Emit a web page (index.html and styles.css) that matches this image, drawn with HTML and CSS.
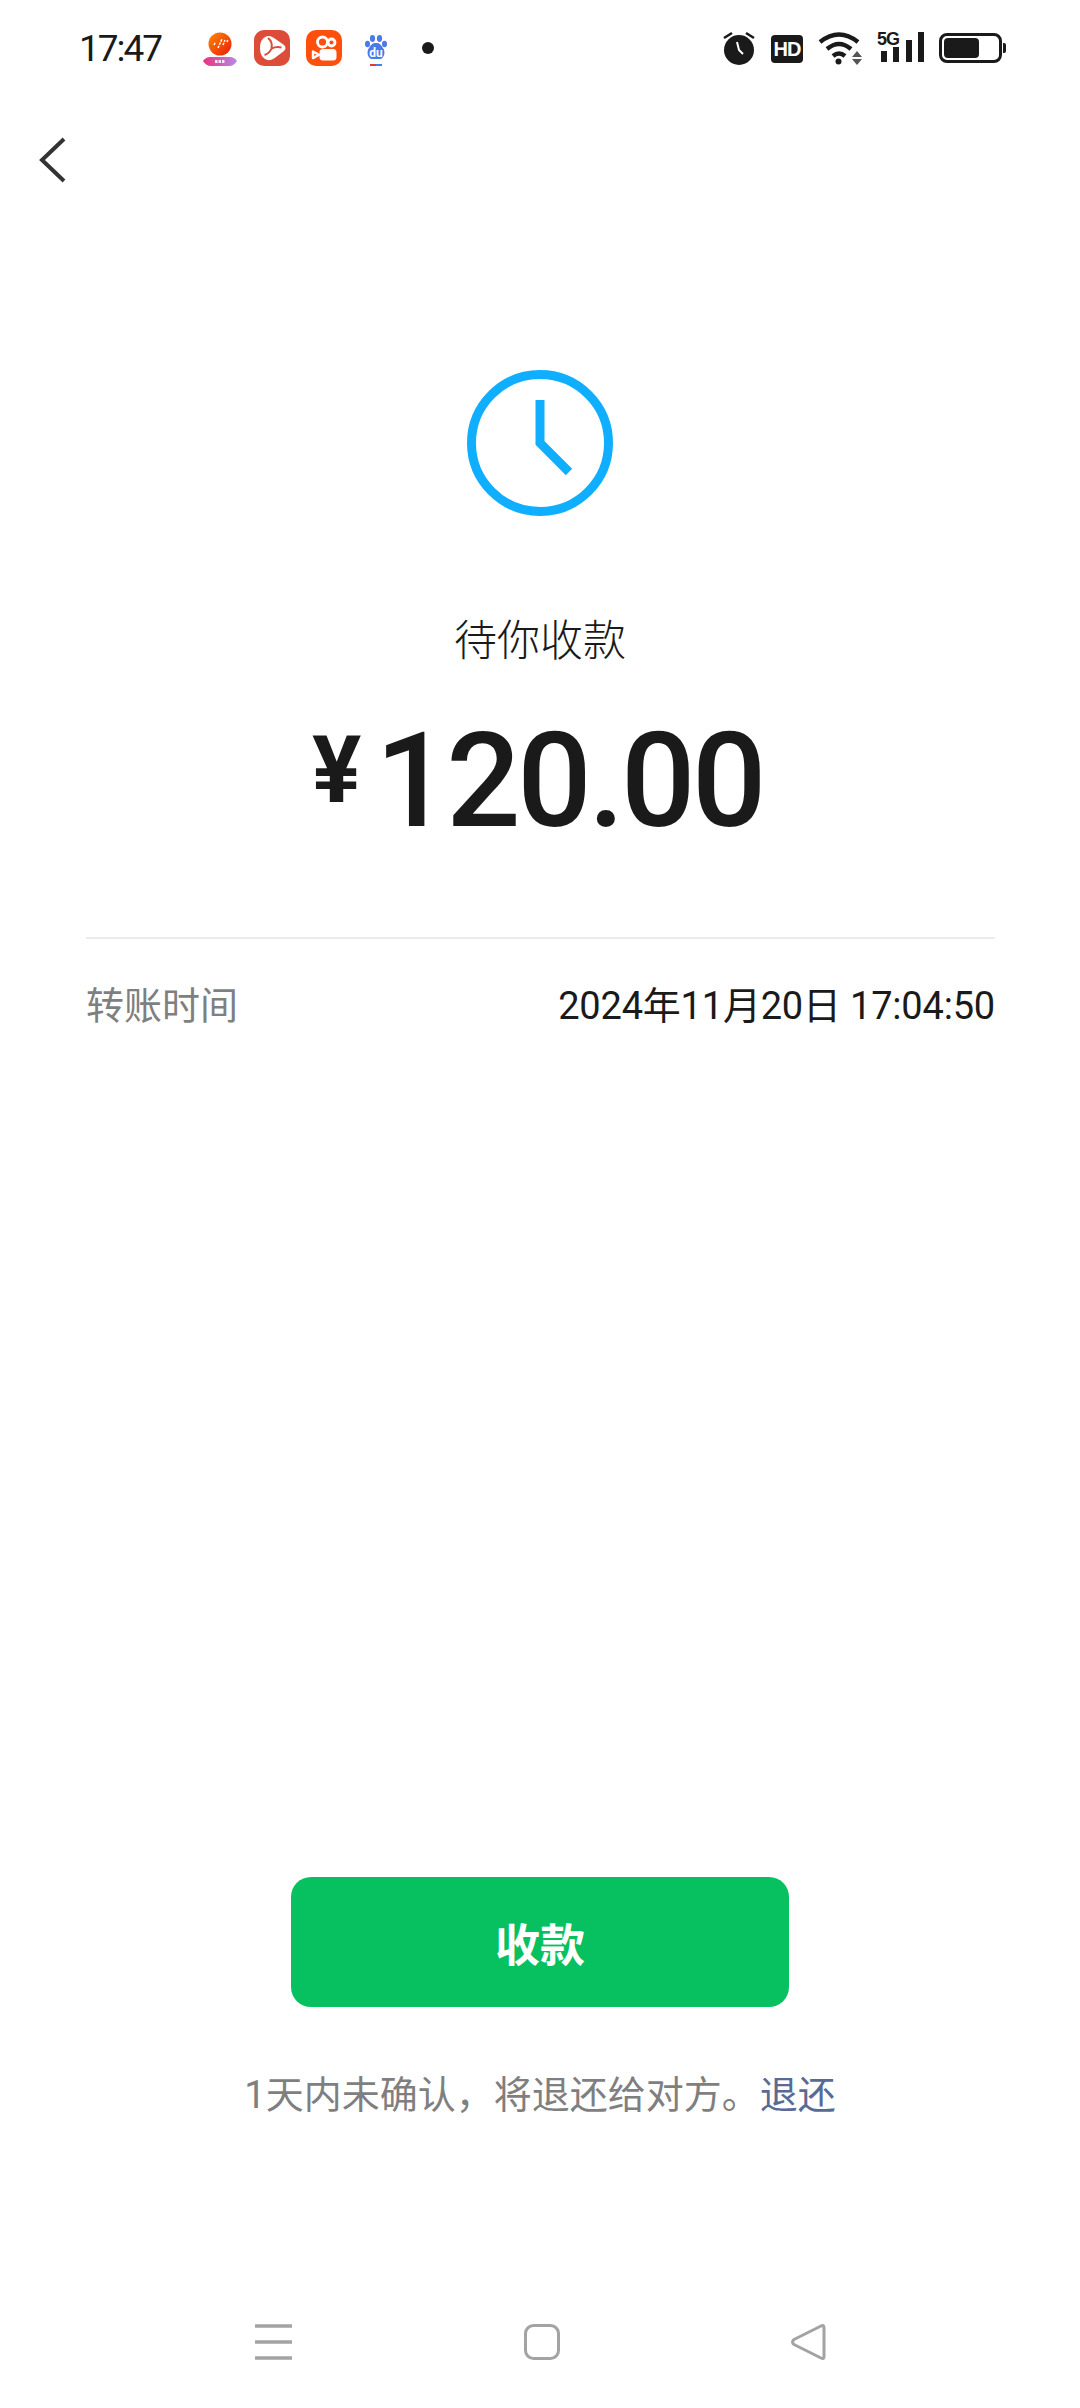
FILE: index.html
```html
<!DOCTYPE html>
<html lang="zh-CN">
<head>
    <meta charset="UTF-8">
    <meta name="viewport" content="width=device-width, initial-scale=1.0">
    <title>待你收款</title>
    <link rel="stylesheet" href="styles.css">
</head>
<body>

<div class="page">
    <!-- status bar -->
    <div class="status-bar">
        <span class="time">17:47</span>
        <div class="app-icons">
            <svg class="ic-music" width="36" height="36" viewBox="0 0 36 36">
                <defs>
                    <linearGradient id="musicBall" x1="0" y1="0" x2="1" y2="1"><stop offset="0" stop-color="#ff8a00"/><stop offset="1" stop-color="#e81a0c"/></linearGradient>
                    <linearGradient id="musicPill" x1="0" y1="0" x2="1" y2="0"><stop offset="0" stop-color="#ee2f7c"/><stop offset="1" stop-color="#b48ae8"/></linearGradient>
                </defs>
                <circle cx="17" cy="14" r="11.500" fill="url(#musicBall)"/>
                <path d="M11 15l1.500-3M15 18l4-9M20 15l2-5M24 12l.8-2" stroke="#fff" stroke-width="1.500" stroke-dasharray="2.500 1"/>
                <path d="M0 31q3-4 7-4h20q4 0 7 4q-3 5-8 5H8q-5 0-8-5z" fill="url(#musicPill)"/>
                <path d="M12 31.500h10" stroke="#fff" stroke-width="3" stroke-dasharray="2.500 1" opacity=".85"/>
            </svg>
            <svg width="36" height="36" viewBox="0 0 36 36">
                <rect width="36" height="36" rx="10" fill="#dd4b39"/>
                <path d="M12 6.500q4-1.500 8 1.500l10 7q3 3 0 6l-10 7.500q-5 3-9 .5-5-3-5-11 0-9 6-11.500z" fill="#fff"/>
                <path d="M14 8q5 4 3.500 10.500M17.500 18.500q-2 5-7 6.500M17.500 18.500q5-2.500 10-1" fill="none" stroke="#dd4b39" stroke-width="2"/>
            </svg>
            <svg width="36" height="36" viewBox="0 0 36 36">
                <rect width="36" height="36" rx="10" fill="#ff4f0d"/>
                <circle cx="16.500" cy="12" r="5" fill="none" stroke="#fff" stroke-width="2.800"/>
                <circle cx="25.500" cy="12.500" r="3.500" fill="none" stroke="#fff" stroke-width="2.800"/>
                <rect x="14.500" y="20" width="15" height="9.500" rx="2.500" fill="#fff" stroke="#fff" stroke-width="2"/>
                <path d="M13 24.800l-6-3.300v6.600z" fill="none" stroke="#fff" stroke-width="2.400" stroke-linejoin="round"/>
            </svg>
            <svg class="ic-baidu" width="24" height="36" viewBox="0 0 24 36">
                <g fill="#4a7be6">
                    <ellipse cx="8.500" cy="8.500" rx="2.600" ry="3.400"/>
                    <ellipse cx="15.500" cy="8.500" rx="2.600" ry="3.400"/>
                    <ellipse cx="3.500" cy="14" rx="2.500" ry="3.200"/>
                    <ellipse cx="20.500" cy="14" rx="2.500" ry="3.200"/>
                    <path d="M12 13c4 0 5 2 7 5 3 4 1 11-3 11H8c-4 0-6-7-3-11 2-3 3-5 7-5z"/>
                </g>
                <text x="12" y="27" class="du-text">du</text>
                <rect x="6" y="34" width="6" height="2" fill="#e03a3a"/>
                <rect x="12" y="34" width="6" height="2" fill="#4a7be6"/>
            </svg>
            <span class="dot"></span>
        </div>
        <div class="sys-icons">
            <svg width="34" height="36" viewBox="0 0 34 36">
                <circle cx="17" cy="20" r="15" fill="#1a1a1a"/>
                <path d="M2 8l8-5M32 8l-8-5" stroke="#1a1a1a" stroke-width="2.600"/>
                <path d="M15 12l2 8 4 4" fill="none" stroke="#fff" stroke-width="2"/>
            </svg>
            <div class="hd-badge">HD</div>
            <svg width="45" height="34" viewBox="0 0 45 34">
                <g fill="none" stroke="#1a1a1a" stroke-width="4.400">
                    <path d="M2 11q19-15 38 0"/>
                    <path d="M9 18q12-10 24 0"/>
                    <path d="M15 25q6-5 12 0"/>
                </g>
                <circle cx="20.500" cy="30.500" r="3" fill="#1a1a1a"/>
                <path d="M39 20l5 6H34zM34 28h10l-5 6z" fill="#555"/>
            </svg>
            <div class="signal">
                <span class="signal-label">5G</span>
                <svg class="signal-bars" width="52" height="32" viewBox="0 0 52 32">
                    <g fill="#1a1a1a">
                        <rect x="4" y="19" width="6" height="11"/>
                        <rect x="16" y="15" width="6" height="15"/>
                        <rect x="29" y="8" width="6" height="22"/>
                        <rect x="41" y="0" width="6" height="30"/>
                    </g>
                </svg>
            </div>
            <div class="battery">
                <div class="battery-body"><div class="battery-level"></div></div>
                <div class="battery-nub"></div>
            </div>
        </div>
    </div>

    <div class="top-nav">
        <svg width="28" height="46" viewBox="0 0 28 46">
            <path d="M25 2L3 23l22 21" fill="none" stroke="#333" stroke-width="4"/>
        </svg>
    </div>

    <div class="main">
        <svg class="clock" width="146" height="146" viewBox="0 0 146 146">
            <circle cx="73" cy="73" r="68.500" fill="none" stroke="#10aeff" stroke-width="9"/>
            <path d="M73 30v43l29 29" fill="none" stroke="#10aeff" stroke-width="9"/>
        </svg>
        <div class="title">待你收款</div>
        <div class="amount"><span class="yen">¥</span><span class="num">120.00</span></div>
    </div>

    <div class="info">
        <div class="info-row">
            <span class="info-label">转账时间</span>
            <span class="info-value">2024年11月20日 17:04:50</span>
        </div>
    </div>

    <div class="spacer"></div>

    <button class="btn-receive" type="button">收款</button>
    <div class="tip">1天内未确认，将退还给对方。<a class="tip-link">退还</a></div>

    <div class="nav-bar">
        <svg width="38" height="36" viewBox="0 0 38 36">
            <path d="M0 2h37M0 18h37M0 34h37" stroke="#a3a3a3" stroke-width="3.400"/>
        </svg>
        <svg width="36" height="36" viewBox="0 0 36 36">
            <rect x="1.500" y="1.500" width="33" height="33" rx="8" fill="none" stroke="#a3a3a3" stroke-width="3"/>
        </svg>
        <svg width="36" height="36" viewBox="0 0 36 36">
            <path d="M33 3.500v29q0 3-3 1.500L3 20.500q-3-2.500 0-5L30 2q3-1.500 3 1.500z" fill="none" stroke="#a3a3a3" stroke-width="3" stroke-linejoin="round"/>
        </svg>
    </div>
</div>

</body>
</html>
```

FILE: styles.css
```css
* {
    box-sizing: border-box;
}
body {
    margin: 0;
    background: #fff;
    font-family: Roboto, "Noto Sans CJK SC", sans-serif;
    color: #1a1a1a;
}
svg {
    display: block;
    flex-shrink: 0;
}
.page {
    width: 1080px;
    height: 2408px;
    display: flex;
    flex-direction: column;
    overflow: hidden;
}

/* status bar */
.status-bar {
    height: 96px;
    display: flex;
    align-items: center;
    padding-left: 79px;
}
.time {
    font-size: 37px;
    width: 124px;
    letter-spacing: -2px;
}
.app-icons {
    display: flex;
    align-items: center;
    gap: 16px;
}
.ic-music {
    margin-right: -1px;
}
.ic-baidu {
    margin-left: 6px;
}
.dot {
    width: 12px;
    height: 12px;
    border-radius: 50%;
    background: #1a1a1a;
    margin-left: 18px;
}
.sys-icons {
    margin-left: auto;
    margin-right: 74px;
    display: flex;
    align-items: center;
    gap: 15px;
}
.du-text {
    font-family: Roboto, sans-serif;
    font-size: 12px;
    font-weight: 700;
    fill: #fff;
    text-anchor: middle;
}
.hd-badge {
    width: 32px;
    height: 28px;
    margin-top: 2px;
    border-radius: 4px;
    background: #1a1a1a;
    color: #fff;
    font-family: "Liberation Sans", sans-serif;
    font-size: 20px;
    font-weight: 700;
    line-height: 28px;
    letter-spacing: -1px;
    text-align: center;
}
.signal {
    width: 52px;
    margin-left: -1px;
}
.signal-label {
    display: block;
    height: 14px;
    font-family: "Liberation Sans", sans-serif;
    font-size: 18px;
    font-weight: 700;
    line-height: 14px;
    letter-spacing: -1px;
    margin-bottom: -14px;
}
.battery {
    display: flex;
    align-items: center;
    gap: 1px;
    margin-left: -5px;
}
.battery-body {
    width: 63px;
    height: 30px;
    border: 3px solid #1a1a1a;
    border-radius: 8px;
    padding: 2px;
}
.battery-level {
    width: 35px;
    height: 100%;
    background: #1a1a1a;
    border-radius: 4px;
}
.battery-nub {
    width: 3px;
    height: 10px;
    background: #1a1a1a;
    border-radius: 0 2px 2px 0;
}

.top-nav {
    padding: 41px 0 0 39px;
}

.main {
    display: flex;
    flex-direction: column;
    align-items: center;
    margin-top: 187px;
}
.title {
    font-size: 43px;
    font-weight: 300;
    line-height: 60px;
    margin-top: 95px;
}
.amount {
    display: flex;
    align-items: center;
    margin-top: 40px;
    height: 140px;
    padding-right: 5px;
}
.yen {
    font-size: 92px;
    font-weight: 700;
    margin-right: 14px;
    margin-bottom: 22px;
}
.num {
    font-size: 131px;
    font-weight: 500;
    letter-spacing: -3.5px;
}

.info {
    margin: 86px 85px 0 86px;
    border-top: 2px solid #ececec;
    padding-top: 37px;
}
.info-row {
    display: flex;
    justify-content: space-between;
    line-height: 60px;
    font-size: 38px;
}
.info-label {
    color: #7f7f7f;
}
.info-value {
    letter-spacing: -0.2px;
}

.spacer {
    flex: 1;
}

.btn-receive {
    align-self: center;
    width: 498px;
    height: 130px;
    border: none;
    border-radius: 20px;
    background: #07c160;
    color: #fff;
    font-family: inherit;
    font-size: 45px;
    font-weight: 700;
    padding: 0;
}
.tip {
    margin-top: 58px;
    text-align: center;
    font-size: 38px;
    line-height: 60px;
    color: #7f7f7f;
}
.tip-link {
    color: #576b95;
}

.nav-bar {
    margin-top: 199px;
    padding: 0 253px 48px 255px;
    display: flex;
    justify-content: space-between;
    align-items: center;
}
```
